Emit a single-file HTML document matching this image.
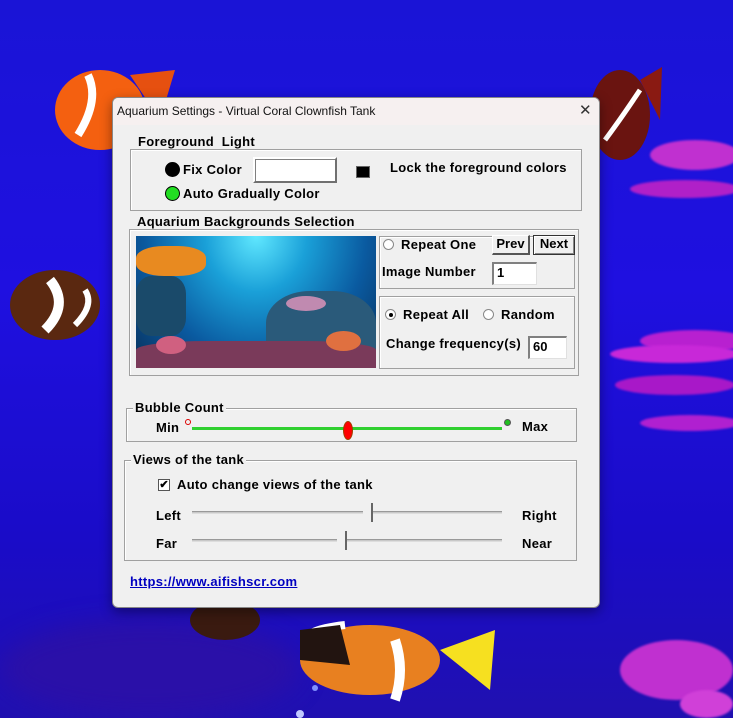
<!DOCTYPE html>
<html style="width:733px;height:718px;overflow:hidden"><head><meta charset="utf-8">
<style>
*{margin:0;padding:0;box-sizing:border-box}
body{width:733px;height:718px;overflow:hidden;position:relative;background:linear-gradient(180deg,#1a14d6 0%,#1f10e0 40%,#1a0cc8 75%,#2010b0 100%);font-family:"Liberation Sans",sans-serif}
.a{position:absolute}
.t{position:absolute;font-weight:bold;font-size:13px;color:#000;white-space:nowrap;line-height:14px;letter-spacing:.3px}
.g{position:absolute;border:1px solid #a0a0a0;box-shadow:1px 1px 0 #fff inset}
.lbl{position:absolute;background:#f0f0f0;padding:0 2px;font-weight:bold;font-size:13px;line-height:14px;letter-spacing:.3px;white-space:nowrap}
.in{position:absolute;background:#fff;border-top:2px solid #808080;border-left:2px solid #808080;border-right:1px solid #e0e0e0;border-bottom:1px solid #e0e0e0;font-weight:bold;font-size:13px;padding-left:3px;line-height:18px}
.rad{position:absolute;width:11px;height:11px;border-radius:50%;background:#fff;border:1px solid #888}
.btn{position:absolute;background:#f0f0f0;border:1px solid #fff;border-right:2px solid #555;border-bottom:2px solid #555;font-weight:bold;font-size:13px;text-align:center;line-height:16px}
.blob{position:absolute;border-radius:50%;background:#c020d8;filter:blur(1px)}
</style></head><body>
<div class="blob" style="left:640px;top:330px;width:110px;height:22px;background:#b820d0"></div>
<div class="blob" style="left:610px;top:345px;width:130px;height:18px;background:#c828d8"></div>
<div class="blob" style="left:615px;top:375px;width:120px;height:20px;background:#a818c8"></div>
<div class="blob" style="left:640px;top:415px;width:100px;height:16px;background:#b020d0"></div>
<div class="blob" style="left:650px;top:140px;width:90px;height:30px;background:#c030d0"></div>
<div class="blob" style="left:630px;top:180px;width:110px;height:18px;background:#b020c8"></div>
<div class="blob" style="left:620px;top:640px;width:113px;height:60px;background:#c030d0"></div>
<div class="blob" style="left:680px;top:690px;width:53px;height:28px;background:#d040d8"></div>
<div class="blob" style="left:0px;top:620px;width:300px;height:98px;background:#2a10a8;filter:blur(12px)"></div>
<svg class="a" style="left:0;top:0" width="733" height="718">
<ellipse cx="100" cy="110" rx="45" ry="40" fill="#f46010"/><path d="M130 75 L175 70 L160 120Z" fill="#e65010"/><path d="M88 75 Q100 100 78 135" stroke="#fff" stroke-width="8" fill="none"/>
<ellipse cx="620" cy="115" rx="30" ry="45" fill="#6a1410"/><path d="M640 90 Q620 120 605 140" stroke="#fff" stroke-width="5" fill="none"/><path d="M640 80 L662 67 L660 120Z" fill="#8a1a12"/>
<ellipse cx="55" cy="305" rx="45" ry="35" fill="#5a2810"/><path d="M50 280 Q70 305 45 330" stroke="#fff" stroke-width="10" fill="none"/><path d="M85 290 Q95 305 75 325" stroke="#fff" stroke-width="6" fill="none"/>
<ellipse cx="370" cy="660" rx="70" ry="35" fill="#e88020"/><path d="M440 650 L495 630 L490 690Z" fill="#f6e020"/><path d="M305 645 Q300 630 345 625" stroke="#fff" stroke-width="8" fill="none"/><path d="M395 640 Q405 670 395 700" stroke="#fff" stroke-width="10" fill="none"/><path d="M300 630 L340 625 L350 665 L300 660Z" fill="#221410"/>
<ellipse cx="225" cy="620" rx="35" ry="20" fill="#3a1a10"/>
<circle cx="300" cy="714" r="4" fill="#c0c8ff"/><circle cx="315" cy="688" r="3" fill="#8090ff"/>
</svg>

<div class="a" style="left:112px;top:97px;width:488px;height:511px;background:#f0f0f0;border:1px solid #888;border-radius:6px;overflow:hidden;box-shadow:0 4px 12px rgba(0,0,0,.4)">
 <div class="a" style="left:0;top:0;width:488px;height:27px;background:#f6f0f0"></div>
 <div class="a" style="left:4px;top:6px;font-size:12px;color:#111;white-space:nowrap">Aquarium Settings - Virtual Coral Clownfish Tank</div>
 <div class="a" style="left:466px;top:3px;font-size:15px;color:#333;font-weight:100">✕</div>
</div>

<div class="g" style="left:130px;top:149px;width:452px;height:62px"></div>
<div class="lbl" style="left:136px;top:135px">Foreground&nbsp; Light</div>
<div class="a" style="left:165px;top:162px;width:15px;height:15px;border-radius:50%;background:#000"></div>
<div class="t" style="left:183px;top:163px">Fix Color</div>
<div class="in" style="left:253px;top:157px;width:84px;height:26px;border-top-color:#fff;border-left-color:#fff;border-right:2px solid #707070;border-bottom:2px solid #707070;box-shadow:inset 1px 1px 0 #808080"></div>
<div class="a" style="left:356px;top:166px;width:14px;height:12px;background:#000;border:1px solid #666"></div>
<div class="t" style="left:390px;top:161px">Lock the foreground colors</div>
<div class="a" style="left:165px;top:186px;width:15px;height:15px;border-radius:50%;background:#22dd22;border:1px solid #000"></div>
<div class="t" style="left:183px;top:187px">Auto Gradually Color</div>

<div class="g" style="left:129px;top:229px;width:450px;height:147px"></div>
<div class="lbl" style="left:135px;top:215px">Aquarium Backgrounds Selection</div>
<div class="a" style="left:136px;top:236px;width:240px;height:132px;overflow:hidden;background:radial-gradient(ellipse at 50% 0%,#60e8ff 0%,#1aa0d8 30%,#0a5aa0 65%,#08305a 100%)">
 <div class="a" style="left:0;top:10px;width:70px;height:30px;background:#e88a20;border-radius:40%"></div>
 <div class="a" style="left:0;top:40px;width:50px;height:60px;background:#1a4a6a;border-radius:30%"></div>
 <div class="a" style="left:130px;top:55px;width:110px;height:80px;background:#2a5a7a;border-radius:40% 40% 0 0"></div>
 <div class="a" style="left:150px;top:60px;width:40px;height:15px;background:#c08ab0;border-radius:50%"></div>
 <div class="a" style="left:0;top:105px;width:240px;height:30px;background:#7a3a5a;border-radius:30% 30% 0 0"></div>
 <div class="a" style="left:20px;top:100px;width:30px;height:18px;background:#d06080;border-radius:50%"></div>
 <div class="a" style="left:190px;top:95px;width:35px;height:20px;background:#e07040;border-radius:50%"></div>
</div>
<div class="g" style="left:379px;top:236px;width:196px;height:53px"></div>
<div class="rad" style="left:383px;top:239px"></div>
<div class="t" style="left:401px;top:238px">Repeat One</div>
<div class="btn" style="left:492px;top:235px;width:38px;height:20px">Prev</div>
<div class="btn" style="left:533px;top:235px;width:42px;height:20px;border:1px solid #333;box-shadow:inset 1px 1px 0 #fff,inset -1px -1px 0 #888">Next</div>
<div class="t" style="left:382px;top:265px">Image Number</div>
<div class="in" style="left:492px;top:262px;width:45px;height:23px">1</div>
<div class="g" style="left:379px;top:296px;width:196px;height:73px"></div>
<div class="rad" style="left:385px;top:309px"><div class="a" style="left:3px;top:3px;width:4px;height:4px;border-radius:50%;background:#000"></div></div>
<div class="t" style="left:403px;top:308px">Repeat All</div>
<div class="rad" style="left:483px;top:309px"></div>
<div class="t" style="left:501px;top:308px">Random</div>
<div class="t" style="left:386px;top:337px">Change frequency(s)</div>
<div class="in" style="left:528px;top:336px;width:39px;height:23px">60</div>

<div class="g" style="left:126px;top:408px;width:451px;height:34px"></div>
<div class="lbl" style="left:133px;top:401px">Bubble Count</div>
<div class="t" style="left:156px;top:421px">Min</div>
<div class="a" style="left:185px;top:419px;width:6px;height:6px;border-radius:50%;border:1px solid #d00"></div>
<div class="a" style="left:192px;top:427px;width:310px;height:3px;background:#30d030"></div>
<div class="a" style="left:343px;top:421px;width:10px;height:19px;border-radius:50%;background:#f00;border:1px solid #a04000"></div>
<div class="a" style="left:504px;top:419px;width:7px;height:7px;border-radius:50%;background:#20c020;border:1px solid #555"></div>
<div class="t" style="left:522px;top:420px">Max</div>

<div class="g" style="left:124px;top:460px;width:453px;height:101px"></div>
<div class="lbl" style="left:131px;top:453px">Views of the tank</div>
<div class="a" style="left:158px;top:479px;width:12px;height:12px;border:1px solid #555;background:#fff;font-size:11px;line-height:10px;text-align:center;font-weight:bold">✔</div>
<div class="t" style="left:177px;top:478px">Auto change views of the tank</div>
<div class="t" style="left:156px;top:509px">Left</div>
<div class="a" style="left:192px;top:511px;width:310px;height:3px;border-top:1px solid #999;border-bottom:1px solid #ddd;background:#c8c8c8"></div>
<div class="a" style="left:363px;top:503px;width:10px;height:19px;background:#f0f0f0;border-right:2px solid #666"></div>
<div class="t" style="left:522px;top:509px">Right</div>
<div class="t" style="left:156px;top:537px">Far</div>
<div class="a" style="left:192px;top:539px;width:310px;height:3px;border-top:1px solid #999;border-bottom:1px solid #ddd;background:#c8c8c8"></div>
<div class="a" style="left:337px;top:531px;width:10px;height:19px;background:#f0f0f0;border-right:2px solid #666"></div>
<div class="t" style="left:522px;top:537px">Near</div>

<div class="t" style="left:130px;top:575px;color:#0000c0;text-decoration:underline">https://www.aifishscr.com</div>
</body></html>
